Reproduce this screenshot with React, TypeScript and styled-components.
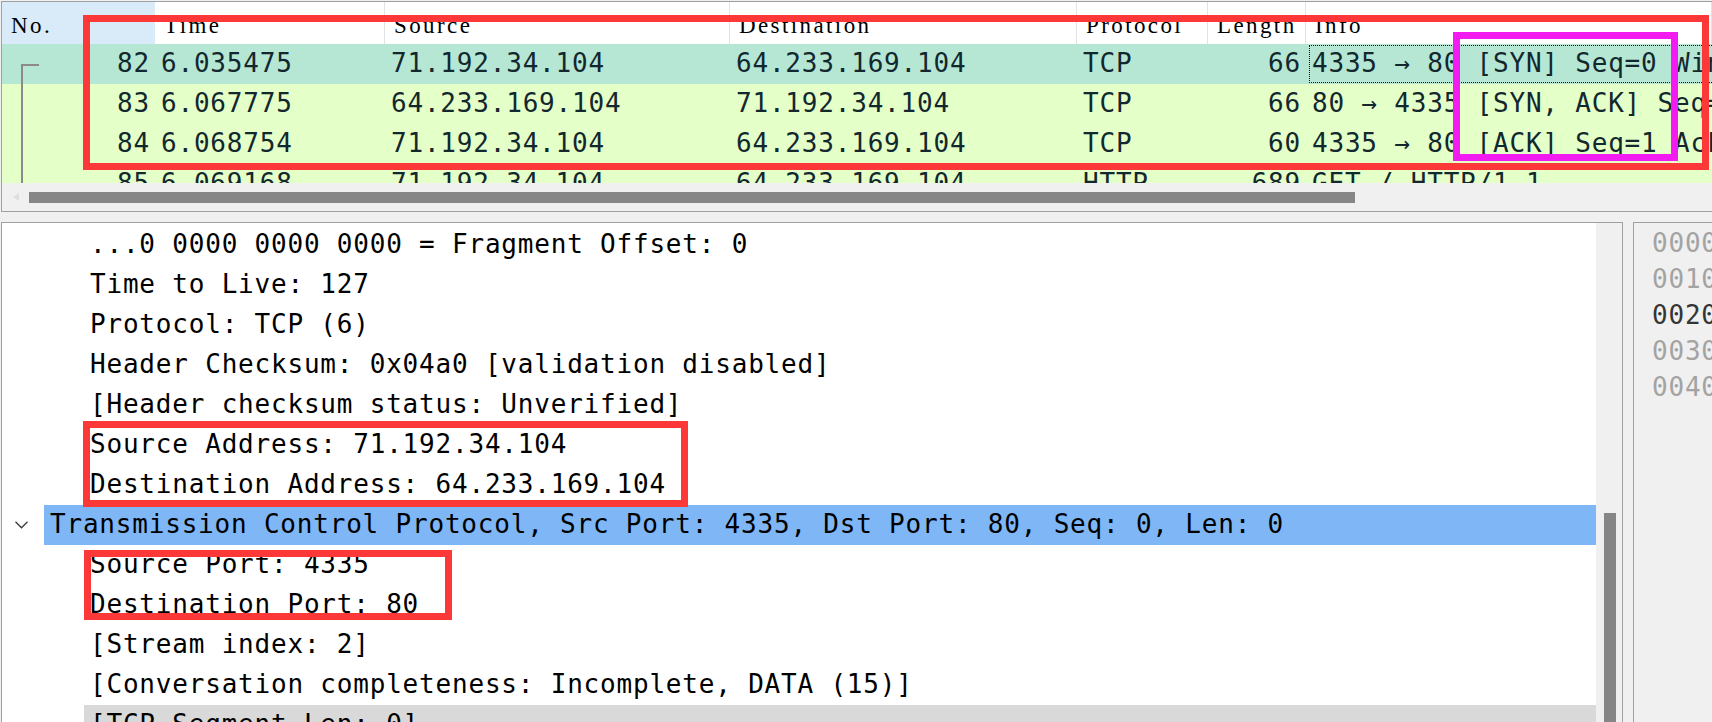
import React from "react";
import styled, { createGlobalStyle, css } from "styled-components";

const GlobalStyle = createGlobalStyle`
  html, body {
    margin: 0;
    padding: 0;
    background: #f0f0f0;
    overflow: hidden;
  }
`;

const MONO = `"DejaVu Sans Mono", "Liberation Mono", monospace`;
const SERIF = `"Liberation Serif", "DejaVu Serif", serif`;
const COLS = "153px 230px 345px 347px 131px 98px 1fr";
const LINE = "#a0a0a0";

const Window = styled.div`
  position: relative;
  width: 1712px;
  height: 722px;
  overflow: hidden;
  background: #f0f0f0;
  display: flex;
  flex-direction: column;
`;

/* ---------- packet list ---------- */

const PacketPane = styled.section`
  flex: none;
  margin: 1px 0 0 1px;
  border: 1px solid ${LINE};
  border-right: none;
  display: flex;
  flex-direction: column;
  background: #fff;
`;

const HeaderRow = styled.div`
  display: grid;
  grid-template-columns: ${COLS};
  height: 42px;
  background: #fff;
`;

const HeaderCell = styled.div<{ $sorted?: boolean }>`
  box-sizing: border-box;
  padding: 5px 0 0 9px;
  font-family: ${SERIF};
  font-size: 23px;
  letter-spacing: 2.4px;
  line-height: 37px;
  color: #000;
  white-space: nowrap;
  overflow: hidden;
  background: ${(p) => (p.$sorted ? "#d9ebf9" : "#fff")};
  border-right: ${(p) => (p.$sorted ? "none" : "1px solid #e3e3e3")};
`;

const Rows = styled.div`
  height: 139px;
  overflow: hidden;
`;

const PacketRow = styled.div<{ $tone: "selected" | "normal" }>`
  display: grid;
  grid-template-columns: ${COLS};
  height: 40px;
  font-family: ${MONO};
  font-size: 26px;
  letter-spacing: 0.8px;
  line-height: 38px;
  color: #12272e;
  background: ${(p) => (p.$tone === "selected" ? "#b5e7d4" : "#e4ffc7")};
`;

const Cell = styled.div<{ $right?: boolean; $focus?: boolean }>`
  position: relative;
  padding: 0 5px 0 6px;
  white-space: pre;
  overflow: hidden;
  text-align: ${(p) => (p.$right ? "right" : "left")};
  ${(p) =>
    p.$focus &&
    css`
      &::after {
        content: "";
        position: absolute;
        top: 1px;
        bottom: 1px;
        left: 3px;
        right: -4px;
        border: 1px dotted #111;
      }
    `}
`;

const NoCell = styled.div`
  display: flex;
  justify-content: space-between;
  padding-right: 5px;
  white-space: pre;
`;

const Related = styled.svg`
  flex: none;
  margin-left: 19px;
  width: 20px;
  height: 40px;
`;

const HScroll = styled.div`
  height: 28px;
  display: flex;
  align-items: center;
  background: #f0f0f0;
`;

const ScrollArrow = styled.svg`
  flex: none;
  width: 27px;
  height: 12px;
`;

const HThumb = styled.div`
  width: 1326px;
  height: 11px;
  background: #868686;
`;

const Splitter = styled.div`
  flex: none;
  height: 10px;
`;

/* ---------- details + bytes ---------- */

const Bottom = styled.div`
  flex: 1;
  display: flex;
  min-height: 0;
`;

const DetailsPane = styled.section`
  flex: none;
  width: 1620px;
  margin-left: 1px;
  border: 1px solid ${LINE};
  border-bottom: none;
  display: flex;
  background: #fff;
`;

const Tree = styled.div`
  flex: 1;
  padding-top: 2px;
  overflow: hidden;
  font-family: ${MONO};
  font-size: 26px;
  letter-spacing: 0.8px;
  color: #000;
`;

const TreeRow = styled.div`
  display: flex;
  height: 40px;
  line-height: 38px;
`;

const Indent = styled.span<{ $level: number }>`
  flex: none;
  width: ${(p) => 2 + (p.$level - 1) * 40}px;
`;

const Expander = styled.span`
  flex: none;
  width: 40px;
  display: flex;
  align-items: center;
  padding-left: 11px;
  box-sizing: border-box;
`;

const Item = styled.span<{ $mark?: "blue" | "gray" }>`
  flex: 1;
  padding-left: 6px;
  white-space: pre;
  background: ${(p) =>
    p.$mark === "blue" ? "#7fb6f5" : p.$mark === "gray" ? "#d9d9d9" : "transparent"};
`;

const VScroll = styled.div`
  flex: none;
  width: 26px;
  background: #f0f0f0;
  padding: 290px 0 0 8px;
  box-sizing: border-box;
  display: flex;
`;

const VThumb = styled.div`
  width: 12px;
  background: #868686;
`;

const HexPane = styled.section`
  flex: 1;
  margin-left: 10px;
  border-top: 1px solid ${LINE};
  border-left: 1px solid ${LINE};
  background: #f0f0f0;
  padding: 2px 0 0 18px;
  overflow: hidden;
  font-family: ${MONO};
  font-size: 26px;
  letter-spacing: 0.8px;
  line-height: 36px;
  white-space: pre;
`;

const HexLine = styled.div<{ $active?: boolean }>`
  color: ${(p) => (p.$active ? "#353535" : "#a3a3a3")};
`;

/* ---------- annotation boxes ---------- */

const Mark = styled.div<{ $x: number; $y: number; $w: number; $h: number; $color: string }>`
  position: absolute;
  left: ${(p) => p.$x}px;
  top: ${(p) => p.$y}px;
  width: ${(p) => p.$w}px;
  height: ${(p) => p.$h}px;
  box-sizing: border-box;
  border: 7px solid ${(p) => p.$color};
  pointer-events: none;
`;

type Packet = {
  no: number;
  time: string;
  src: string;
  dst: string;
  proto: string;
  len: number;
  info: string;
};

const packets: Packet[] = [
  { no: 82, time: "6.035475", src: "71.192.34.104", dst: "64.233.169.104", proto: "TCP", len: 66, info: "4335 → 80 [SYN] Seq=0 Win=64240 Len=0 MSS=1460" },
  { no: 83, time: "6.067775", src: "64.233.169.104", dst: "71.192.34.104", proto: "TCP", len: 66, info: "80 → 4335 [SYN, ACK] Seq=0 Ack=1 Win=65535" },
  { no: 84, time: "6.068754", src: "71.192.34.104", dst: "64.233.169.104", proto: "TCP", len: 60, info: "4335 → 80 [ACK] Seq=1 Ack=1 Win=64240" },
  { no: 85, time: "6.069168", src: "71.192.34.104", dst: "64.233.169.104", proto: "HTTP", len: 689, info: "GET / HTTP/1.1" },
];

type Node = { level: number; text: string; mark?: "blue" | "gray"; open?: boolean };

const tree: Node[] = [
  { level: 2, text: "...0 0000 0000 0000 = Fragment Offset: 0" },
  { level: 2, text: "Time to Live: 127" },
  { level: 2, text: "Protocol: TCP (6)" },
  { level: 2, text: "Header Checksum: 0x04a0 [validation disabled]" },
  { level: 2, text: "[Header checksum status: Unverified]" },
  { level: 2, text: "Source Address: 71.192.34.104" },
  { level: 2, text: "Destination Address: 64.233.169.104" },
  { level: 1, open: true, mark: "blue", text: "Transmission Control Protocol, Src Port: 4335, Dst Port: 80, Seq: 0, Len: 0" },
  { level: 2, text: "Source Port: 4335" },
  { level: 2, text: "Destination Port: 80" },
  { level: 2, text: "[Stream index: 2]" },
  { level: 2, text: "[Conversation completeness: Incomplete, DATA (15)]" },
  { level: 2, mark: "gray", text: "[TCP Segment Len: 0]" },
];

const hex = [
  { off: "0000", bytes: "00 e0 fc 12 34 56 00 1a" },
  { off: "0010", bytes: "00 30 8b 1c 40 00 7f 06" },
  { off: "0020", bytes: "a9 68 10 ef 00 50 e3 1a", active: true },
  { off: "0030", bytes: "fa f0 3c 7e 00 00 02 04" },
  { off: "0040", bytes: "04 02" },
];

function RelatedMark({ first }: { first: boolean }) {
  return (
    <Related viewBox="0 0 20 40">
      <path
        d={first ? "M1 20 V40 M0 21 H18" : "M1 0 V40"}
        stroke="#8a8a8a"
        strokeWidth="2"
        fill="none"
      />
    </Related>
  );
}

export default function App() {
  return (
    <>
      <GlobalStyle />
      <Window>
        <PacketPane>
          <HeaderRow>
            <HeaderCell $sorted>No.</HeaderCell>
            <HeaderCell>Time</HeaderCell>
            <HeaderCell>Source</HeaderCell>
            <HeaderCell>Destination</HeaderCell>
            <HeaderCell>Protocol</HeaderCell>
            <HeaderCell>Length</HeaderCell>
            <HeaderCell>Info</HeaderCell>
          </HeaderRow>
          <Rows>
            {packets.map((p, i) => (
              <PacketRow key={p.no} $tone={i === 0 ? "selected" : "normal"}>
                <NoCell>
                  <RelatedMark first={i === 0} />
                  <span>{p.no}</span>
                </NoCell>
                <Cell>{p.time}</Cell>
                <Cell>{p.src}</Cell>
                <Cell>{p.dst}</Cell>
                <Cell>{p.proto}</Cell>
                <Cell $right>{p.len}</Cell>
                <Cell $focus={i === 0}>{p.info}</Cell>
              </PacketRow>
            ))}
          </Rows>
          <HScroll>
            <ScrollArrow viewBox="0 0 27 12">
              <path d="M17 2 L11 6 L17 10 Z" fill="#dedede" />
            </ScrollArrow>
            <HThumb />
          </HScroll>
        </PacketPane>

        <Splitter />

        <Bottom>
          <DetailsPane>
            <Tree>
              {tree.map((n, i) => (
                <TreeRow key={i}>
                  <Indent $level={n.level} />
                  <Expander>
                    {n.open && (
                      <svg width="13" height="8" viewBox="0 0 13 8">
                        <path d="M0.5 0.8 L6.5 6.8 L12.5 0.8" stroke="#3a3a3a" strokeWidth="1.3" fill="none" />
                      </svg>
                    )}
                  </Expander>
                  <Item $mark={n.mark}>{n.text}</Item>
                </TreeRow>
              ))}
            </Tree>
            <VScroll>
              <VThumb />
            </VScroll>
          </DetailsPane>
          <HexPane>
            {hex.map((h) => (
              <HexLine key={h.off} $active={h.active}>
                {h.off}  {h.bytes}
              </HexLine>
            ))}
          </HexPane>
        </Bottom>

        <Mark $x={83} $y={15} $w={1626} $h={155} $color="#fd3838" />
        <Mark $x={1453} $y={32} $w={225} $h={129} $color="#f21cf0" />
        <Mark $x={83} $y={421} $w={605} $h={86} $color="#fd3838" />
        <Mark $x={84} $y={550} $w={368} $h={70} $color="#fd3838" />
      </Window>
    </>
  );
}
